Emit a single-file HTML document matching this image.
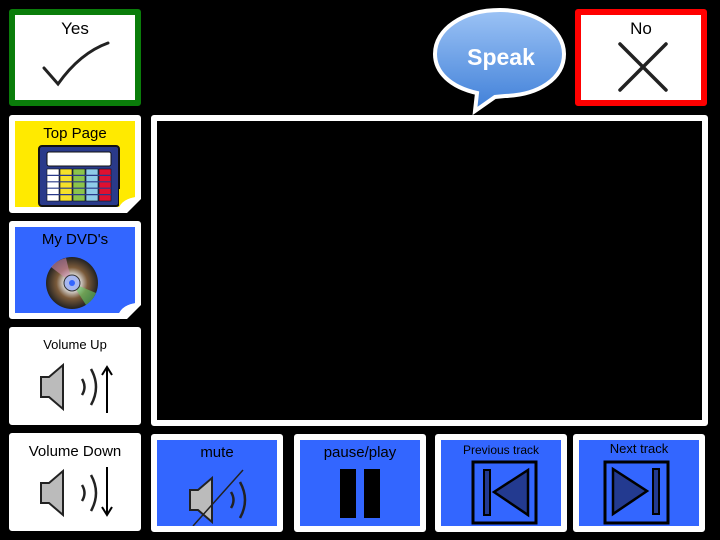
<!DOCTYPE html>
<html><head><meta charset="utf-8"><style>
body{margin:0;width:720px;height:540px;background:#000;position:relative;overflow:hidden;font-family:"Liberation Sans",sans-serif}
.b{position:absolute;box-sizing:border-box;border-radius:3px;border:6px solid #fff;background:#fff}
.b .t{position:absolute;left:0;right:0;text-align:center;color:#000}
svg{position:absolute}
</style></head><body>
<div class="b" style="left:9px;top:9px;width:132px;height:97px;border-color:#0a7d0a">
 <div class="t" style="top:4px;font-size:17px">Yes</div>
 <svg style="left:0;top:0" width="120" height="85"><path d="M29 53 L43 69 Q65 38 93 28" stroke="#222" stroke-width="3" fill="none" stroke-linecap="round"/></svg>
</div>
<div class="b" style="left:575px;top:9px;width:132px;height:97px;border-color:#f00">
 <div class="t" style="top:4px;font-size:17px">No</div>
 <svg style="left:0;top:0" width="120" height="85"><path d="M39 29 L85 75 M85 29 L39 75" stroke="#222" stroke-width="3.5" stroke-linecap="round"/></svg>
</div>
<svg style="left:430px;top:5px" width="140" height="110">
 <defs><linearGradient id="g" x1="0" y1="0" x2="0" y2="1"><stop offset="0" stop-color="#9cc3f5"/><stop offset="1" stop-color="#3f7fd8"/></linearGradient></defs>
 <path d="M70 5 C105 5 134 24 134 49 C134 74 108 90 75 91 L65 92 L45 106 L47 88 C20 82 5 67 5 49 C5 24 33 5 70 5 Z" fill="url(#g)" stroke="#fff" stroke-width="4"/>
 <text x="71" y="60" text-anchor="middle" font-family="Liberation Sans,sans-serif" font-weight="bold" font-size="23" fill="#fff">Speak</text>
</svg>
<div class="b" style="left:9px;top:115px;width:132px;height:98px;background:#ffea00">
 <div class="t" style="top:4px;font-size:15px">Top Page</div>
 <svg style="left:23px;top:24px" width="82" height="62"><rect x="1" y="1" width="80" height="60" rx="3" fill="#2a3a8a" stroke="#111" stroke-width="2"/><rect x="9" y="7" width="64" height="14" rx="2" fill="#fff" stroke="#111"/>
 <g stroke="#111" stroke-width=".6">
 <rect x="9" y="24" width="12" height="32" fill="#fff"/><rect x="22" y="24" width="12" height="32" fill="#f5e12a"/><rect x="35" y="24" width="12" height="32" fill="#8cc44a"/><rect x="48" y="24" width="12" height="32" fill="#8ecbe8"/><rect x="61" y="24" width="12" height="32" fill="#e01030"/></g>
 <path d="M9 30.4H73M9 36.8H73M9 43.2H73M9 49.6H73" stroke="#2a3a8a" stroke-width="1.2"/></svg>
</div>
<svg style="left:119px;top:189px" width="22" height="24"><path d="M16 0 H22 V24 H0 V18 Q4 10 16 8 Z" fill="#fff"/><path d="M22 10 V24 H8 Z" fill="#000"/><path d="M16 0 V8 Q4 10 0 18 V0Z" fill="#ffea00"/></svg>
<div class="b" style="left:9px;top:221px;width:132px;height:98px;background:#3366ff">
 <div class="t" style="top:4px;font-size:15px">My DVD's</div>
 <svg style="left:31px;top:30px" width="54" height="54"><defs><radialGradient id="d"><stop offset=".3" stop-color="#ddd"/><stop offset=".6" stop-color="#7a5a3a"/><stop offset="1" stop-color="#222"/></radialGradient></defs><circle cx="26" cy="26" r="26" fill="url(#d)"/><path d="M26 26 L5 10 A26 26 0 0 1 20 1Z" fill="#c8a" opacity=".6"/><path d="M26 26 L50 36 A26 26 0 0 1 40 48Z" fill="#6c6" opacity=".6"/><circle cx="26" cy="26" r="8" fill="#a8b8f0" stroke="#333"/><circle cx="26" cy="26" r="3" fill="#3366ff"/></svg>
</div>
<svg style="left:119px;top:295px" width="22" height="24"><path d="M16 0 H22 V24 H0 V18 Q4 10 16 8 Z" fill="#fff"/><path d="M22 10 V24 H8 Z" fill="#000"/><path d="M16 0 V8 Q4 10 0 18 V0Z" fill="#3366ff"/></svg>
<div class="b" style="left:9px;top:327px;width:132px;height:98px">
 <div class="t" style="top:4px;font-size:13px">Volume Up</div>
 <svg style="left:0;top:0" width="120" height="86"><path d="M26 44H34L48 32V76L34 64H26Z" fill="#bbb" stroke="#222" stroke-width="2"/><path d="M67 46 Q72 54 67 62M76 36 Q86 54 76 72" stroke="#222" stroke-width="2.5" fill="none"/><path d="M92 80V34M87 42L92 34L97 42" stroke="#000" stroke-width="2" fill="none"/></svg>
</div>
<div class="b" style="left:9px;top:433px;width:132px;height:98px">
 <div class="t" style="top:4px;font-size:15px">Volume Down</div>
 <svg style="left:0;top:0" width="120" height="86"><path d="M26 44H34L48 32V76L34 64H26Z" fill="#bbb" stroke="#222" stroke-width="2"/><path d="M67 46 Q72 54 67 62M76 36 Q86 54 76 72" stroke="#222" stroke-width="2.5" fill="none"/><path d="M92 28V76M87 68L92 76L97 68" stroke="#000" stroke-width="2" fill="none"/></svg>
</div>
<div class="b" style="left:151px;top:115px;width:557px;height:311px;background:#000"></div>
<div class="b" style="left:151px;top:434px;width:132px;height:98px;background:#3366ff">
 <div class="t" style="top:4px;font-size:15px">mute</div>
 <svg style="left:0;top:0" width="120" height="86"><path d="M33 50H41L55 38V82L41 70H33Z" fill="#bbb" stroke="#222" stroke-width="2"/><path d="M74 52 Q79 60 74 68M83 42 Q93 60 83 78" stroke="#222" stroke-width="2.5" fill="none"/><path d="M36 86L86 30" stroke="#222" stroke-width="1.5"/></svg>
</div>
<div class="b" style="left:294px;top:434px;width:132px;height:98px;background:#3366ff">
 <div class="t" style="top:4px;font-size:15px">pause/play</div>
 <div style="position:absolute;left:40px;top:29px;width:16px;height:49px;background:#000"></div>
 <div style="position:absolute;left:64px;top:29px;width:16px;height:49px;background:#000"></div>
</div>
<div class="b" style="left:435px;top:434px;width:132px;height:98px;background:#3366ff">
 <div class="t" style="top:3px;font-size:12px">Previous track</div>
 <svg style="left:0;top:0" width="120" height="86"><rect x="32" y="22" width="63" height="61" fill="none" stroke="#000" stroke-width="3"/><rect x="43" y="30" width="6" height="45" fill="#233a90" stroke="#000" stroke-width="2"/><path d="M87 30V75L53 52Z" fill="#233a90" stroke="#000" stroke-width="2.5"/></svg>
</div>
<div class="b" style="left:573px;top:434px;width:132px;height:98px;background:#3366ff">
 <div class="t" style="top:1px;font-size:13px">Next track</div>
 <svg style="left:0;top:0" width="120" height="86"><rect x="26" y="22" width="63" height="61" fill="none" stroke="#000" stroke-width="3"/><rect x="74" y="29" width="6" height="45" fill="#233a90" stroke="#000" stroke-width="2"/><path d="M34 29V74L68 51Z" fill="#233a90" stroke="#000" stroke-width="2.5"/></svg>
</div>
</body></html>
